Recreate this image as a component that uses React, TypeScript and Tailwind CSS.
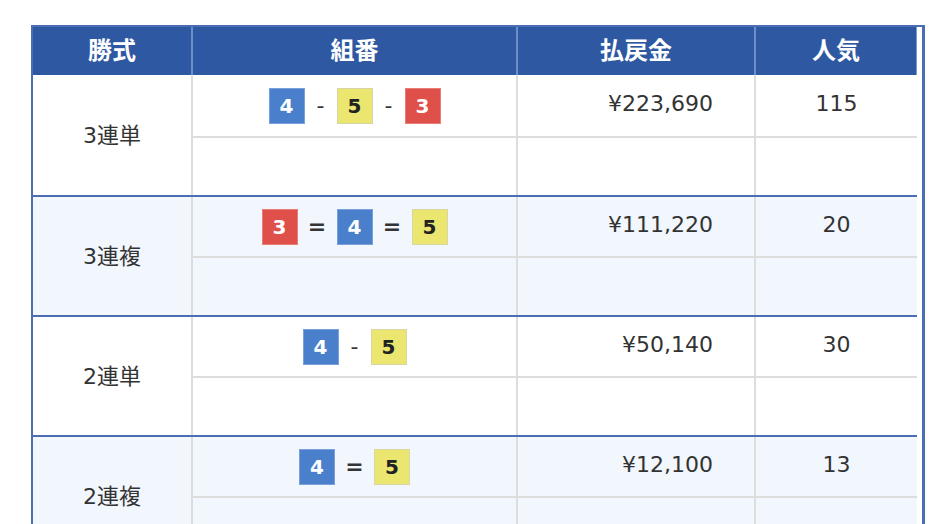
import React from "react";

type Num = 1 | 2 | 3 | 4 | 5 | 6;

const badgeCls: Record<number, string> = {
  3: "bg-[#e0504b] border-[#e97c77] text-white",
  4: "bg-[#4a7fcc] border-[#79a0da] text-white",
  5: "bg-[#ebe66f] border-[#d8d6a6] text-[#222]",
};

function Badge({ n }: { n: Num }) {
  return (
    <span
      className={`flex h-[36px] w-[36px] items-center justify-center border text-[20px] font-bold leading-none ${badgeCls[n]}`}
    >
      {n}
    </span>
  );
}

function Sep({ ch }: { ch: string }) {
  return (
    <span
      className={`flex items-center justify-center text-[22px] text-[#333] ${
        ch === "=" ? "w-[39px] font-bold" : "w-[32px]"
      }`}
    >
      {ch}
    </span>
  );
}

type Row = {
  kind: string;
  combo: (Num | string)[];
  amount: string;
  pop: string;
};

const rows: Row[] = [
  { kind: "3連単", combo: [4, "-", 5, "-", 3], amount: "¥223,690", pop: "115" },
  { kind: "3連複", combo: [3, "=", 4, "=", 5], amount: "¥111,220", pop: "20" },
  { kind: "2連単", combo: [4, "-", 5], amount: "¥50,140", pop: "30" },
  { kind: "2連複", combo: [4, "=", 5], amount: "¥12,100", pop: "13" },
];

export default function App() {
  return (
    <div
      className="h-[524px] w-[942px] overflow-hidden bg-white text-[#333]"
      style={{ fontFamily: '"DejaVu Sans", "Noto Sans CJK JP", sans-serif' }}
    >
      <div className="ml-[31px] mt-[25px] w-[894px] border-l-2 border-r-[3px] border-t-2 border-[#4b6db3] pr-[5px]">
        {/* header */}
        <div className="flex h-[48px] bg-[#2e59a2] text-[24px] font-bold text-white">
          <div className="flex w-[160px] items-center justify-center border-r-2 border-[#6f8dc6]">勝式</div>
          <div className="flex w-[325px] items-center justify-center border-r-2 border-[#6f8dc6]">組番</div>
          <div className="flex w-[238px] items-center justify-center border-r-2 border-[#6f8dc6]">払戻金</div>
          <div className="flex w-[161px] items-center justify-center border-r border-[#7d99cc]">人気</div>
        </div>
        {rows.map((r, i) => (
          <div
            key={i}
            className={`flex border-b-2 border-[#4b6db3] ${i === 0 ? "h-[122px]" : "h-[120px]"} ${
              i % 2 === 1 ? "bg-[#f2f6fd]" : "bg-white"
            }`}
          >
            <div className="flex w-[160px] items-center justify-center border-r-2 border-[#dddddd] text-[22px]">
              {r.kind}
            </div>
            <div className="flex w-[325px] flex-col border-r-2 border-[#dddddd]">
              <div
                className={`flex items-center justify-center border-b-2 border-[#dddddd] ${
                  i === 0 ? "h-[63px]" : "h-[61px]"
                }`}
              >
                {r.combo.map((c, j) =>
                  typeof c === "number" ? <Badge key={j} n={c} /> : <Sep key={j} ch={c} />
                )}
              </div>
              <div className="flex-1" />
            </div>
            <div className="flex w-[238px] flex-col border-r-2 border-[#dddddd]">
              <div
                className={`flex items-center justify-end border-b-2 border-[#dddddd] pb-[5px] pr-[41px] text-[22px] ${
                  i === 0 ? "h-[63px]" : "h-[61px]"
                }`}
              >
                {r.amount}
              </div>
              <div className="flex-1" />
            </div>
            <div className="flex w-[161px] flex-col">
              <div
                className={`flex items-center justify-center border-b-2 border-[#dddddd] pb-[5px] text-[22px] ${
                  i === 0 ? "h-[63px]" : "h-[61px]"
                }`}
              >
                {r.pop}
              </div>
              <div className="flex-1" />
            </div>
          </div>
        ))}
      </div>
    </div>
  );
}
